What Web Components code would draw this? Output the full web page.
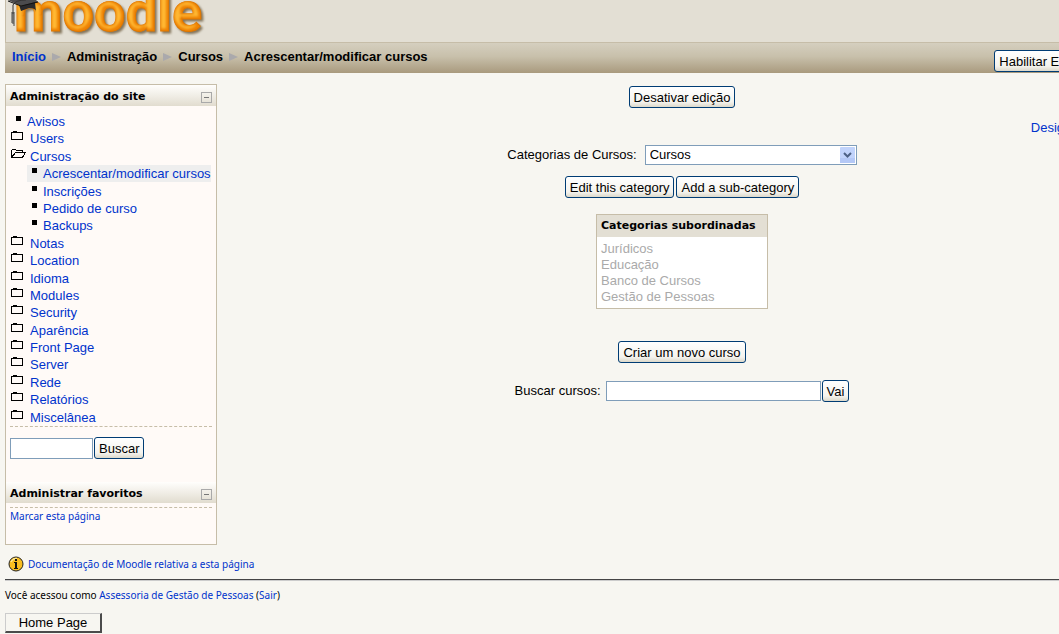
<!DOCTYPE html>
<html lang="pt">
<head>
<meta charset="utf-8">
<title>Acrescentar/modificar cursos</title>
<style>
  html { overflow: hidden; }
  body { margin: 0; background: #f7f6f1; color: #000; font: 13px/16px "Liberation Sans", Arial, sans-serif; }
</style>
</head>
<body>
<moodle-page></moodle-page>

<template id="t-page">
  <style>
    :host { display: block; padding-left: 5px; width: calc(100% + 83px); }
    .columns { display: grid; grid-template-columns: 212px 1fr; padding-top: 11px; }
  </style>
  <moodle-banner></moodle-banner>
  <nav-bar></nav-bar>
  <div class="columns">
    <admin-sidebar></admin-sidebar>
    <course-main></course-main>
  </div>
  <page-footer></page-footer>
</template>

<template id="t-banner">
  <style>
    :host { display: block; height: 42px; background: #e3dfd4; border-left: 1px solid #c6bda8; border-bottom: 1px solid #c6bda8; overflow: hidden; }
    svg { display: block; }
    text { font: 700 56px Roboto, sans-serif; }
  </style>
  <svg width="204" height="42" viewBox="6 0 204 42" role="img" aria-label="moodle">
    <defs>
      <filter id="bevel" x="-5%" y="-20%" width="112%" height="150%" color-interpolation-filters="sRGB">
        <feMorphology in="SourceAlpha" operator="erode" radius="2" result="core"/>
        <feGaussianBlur in="core" stdDeviation="1" result="glow"/>
        <feOffset in="glow" dx="-1" dy="-1" result="lit"/>
        <feFlood flood-color="#ffb833"/>
        <feComposite in2="lit" operator="in" result="light"/>
        <feComposite in="light" in2="SourceAlpha" operator="in" result="inner"/>
        <feGaussianBlur in="SourceAlpha" stdDeviation="1"/>
        <feOffset dx="2" dy="2" result="shade"/>
        <feFlood flood-color="#6b5a3c" flood-opacity=".8"/>
        <feComposite in2="shade" operator="in" result="shadow"/>
        <feMerge><feMergeNode in="shadow"/><feMergeNode in="SourceGraphic"/><feMergeNode in="inner"/></feMerge>
      </filter>
    </defs>
    <text x="14" y="31" fill="#ee8304" stroke="#e07800" stroke-width="1" filter="url(#bevel)">moodle</text>
    <path d="M8 0L21 6L38 2L36 0Z" fill="#4b4b4d"/>
    <path d="M19 5L21 11L29 8Q36 8 36 12L35 2L21 6Z" fill="#29292b"/>
    <path d="M8 1L21 6L38 2" fill="none" stroke="#111" stroke-width="1"/>
    <path d="M26 0Q15 0 13 5V14" fill="none" stroke="#333" stroke-width="1"/>
    <path d="M12 12V23M14 12V26M13 12V24" stroke="#444" stroke-width="1"/>
  </svg>
</template>

<template id="t-nav">
  <style>
    :host { display: flex; justify-content: space-between; align-items: flex-start; height: 30px; background: linear-gradient(#d5cfbf, #c8c0ab 45%, #a99a7e); font-weight: bold; }
    ol { display: flex; margin: 0; padding: 6px 7px; list-style: none; }
    li { display: flex; align-items: center; }
    li + li::before { content: ""; margin: 0 6px; border-left: 9px solid #aaa9ac; border-top: 4px solid transparent; border-bottom: 4px solid transparent; }
    a { color: #0033cc; text-decoration: none; }
    xp-button { margin: 7px 9px 0 0; font-weight: normal; }
  </style>
  <ol>
    <li><a href="#">Início</a></li><li>Administração</li><li>Cursos</li><li>Acrescentar/modificar cursos</li>
  </ol>
  <xp-button>Habilitar Edição Blocos</xp-button>
</template>

<template id="t-button">
  <style>
    :host { display: inline-block; }
    button { box-sizing: border-box; display: block; height: 22px; margin: 0; padding: 1px 4px 0; border: 1px solid #003c74; border-radius: 3px; background: linear-gradient(#fff, #f4f3ee 75%, #dcd8ca); color: #000; font: inherit; line-height: 20px; white-space: nowrap; }
    :host([classic]) button { width: 97px; height: 20px; padding-top: 0; border: 2px solid; border-color: #ccc #4b4b4b #4b4b4b #ccc; border-top-width: 1px; border-left-width: 1px; border-radius: 0; background: #f7f6f1; line-height: 16px; }
  </style>
  <button type="button"><slot></slot></button>
</template>

<template id="t-head">
  <style>
    :host { display: flex; justify-content: space-between; align-items: flex-start; height: 21px; padding: 0 4px; background: linear-gradient(#fffefc, #efece4 55%, #e1dccf); }
    h2 { margin: 0; font: bold 11px/24px "DejaVu Sans", Verdana, sans-serif; }
    button { box-sizing: border-box; width: 11px; height: 11px; margin-top: 7px; padding: 0 2px; border: 1px solid #a9a9a9; background: none; }
    button::before { content: ""; display: block; height: 1px; background: #777; }
  </style>
  <h2><slot></slot></h2>
  <button type="button" aria-label="Ocultar bloco"></button>
</template>

<template id="t-item">
  <style>
    :host { display: flex; align-items: flex-start; padding-left: 5px; }
    svg { flex: none; width: 19px; height: 12px; }
    :host([kind="page"]) svg { width: 16px; }
    :host([sub]) { padding-left: 21px; }
    span { display: flex; }
    :host([current]) span { background: #eee; }
    a { color: #0033cc; text-decoration: none; line-height: 17px; white-space: nowrap; }
    path, rect { display: none; }
    :host([kind="page"]) .dot, :host([kind="folder"]) .shut, :host([kind="open"]) .open { display: block; }
  </style>
  <span>
    <svg viewBox="0 0 19 12" preserveAspectRatio="xMinYMin slice" aria-hidden="true" shape-rendering="crispEdges">
      <rect class="dot" x="5" y="3" width="5" height="5"/>
      <path class="shut" d="M0 2H2V1H6V2H12V10H0ZM1 3V9H11V3Z" fill-rule="evenodd"/>
      <path class="open" d="M.5 9.500V2.500L1.500 1.500H4.500L5.500 2.500H11.500V4.500M.5 9.500L4.500 4.500H14.500L11.500 9.500Z" fill="none" stroke="#000"/>
    </svg>
    <a href="#"><slot></slot></a>
  </span>
</template>

<template id="t-side">
  <style>
    :host { box-sizing: border-box; display: block; border: 1px solid #c6bda8; background: #fffaf7; min-height: 461px; }
    nav { display: grid; grid-auto-rows: 1fr; height: 313px; padding-top: 7px; }
    hr { margin: 0 4px; border: 0; border-top: 1px dashed #c6bda8; }
    form { display: flex; align-items: center; gap: 1px; margin: 0; padding: 10px 4px 23px; }
    input { box-sizing: border-box; width: 83px; height: 21px; border: 1px solid #7f9db9; background: #fff; font: inherit; }
    .mark { margin-top: 4px; }
    a { display: block; padding: 0 4px; color: #0033cc; text-decoration: none; font: 10px/16px "Noto Sans", sans-serif; }
  </style>
  <block-head>Administração do site</block-head>
  <nav aria-label="Administração do site">
    <tree-item kind="page">Avisos</tree-item>
    <tree-item kind="folder">Users</tree-item>
    <tree-item kind="open">Cursos</tree-item>
    <tree-item kind="page" sub current>Acrescentar/modificar cursos</tree-item>
    <tree-item kind="page" sub>Inscrições</tree-item>
    <tree-item kind="page" sub>Pedido de curso</tree-item>
    <tree-item kind="page" sub>Backups</tree-item>
    <tree-item kind="folder">Notas</tree-item>
    <tree-item kind="folder">Location</tree-item>
    <tree-item kind="folder">Idioma</tree-item>
    <tree-item kind="folder">Modules</tree-item>
    <tree-item kind="folder">Security</tree-item>
    <tree-item kind="folder">Aparência</tree-item>
    <tree-item kind="folder">Front Page</tree-item>
    <tree-item kind="folder">Server</tree-item>
    <tree-item kind="folder">Rede</tree-item>
    <tree-item kind="folder">Relatórios</tree-item>
    <tree-item kind="folder">Miscelânea</tree-item>
  </nav>
  <hr>
  <form><input type="text" aria-label="Buscar"><xp-button>Buscar</xp-button></form>
  <block-head>Administrar favoritos</block-head>
  <hr class="mark">
  <a href="#">Marcar esta página</a>
</template>

<template id="t-main">
  <style>
    :host { display: flex; flex-direction: column; align-items: center; padding-top: 2px; }
    a { color: #0033cc; text-decoration: none; }
    .assign { align-self: flex-end; margin: 12px 15px 9px; }
    .row { display: flex; align-items: center; gap: 8px; margin: 0; }
    .tight { gap: 1px; }
    .pair { gap: 2px; margin: 11px 0 16px; }
    .select { display: grid; width: 212px; height: 20px; }
    .select > * { grid-area: 1 / 1; }
    select { box-sizing: border-box; width: 100%; height: 20px; padding: 0 4px; border: 1px solid #7f9db9; border-radius: 0; background: #fff; color: #000; font: inherit; appearance: none; }
    .select svg { justify-self: end; margin: 2px; pointer-events: none; }
    table { border: 1px solid #c6bda8; border-spacing: 0; background: #fff; width: 172px; margin-bottom: 32px; }
    th { padding: 0 4px; background: #e3dfd4; text-align: left; white-space: nowrap; font: bold 11px/22px "DejaVu Sans", Verdana, sans-serif; }
    td { padding: 0 4px; }
    tbody tr:first-child td { padding-top: 4px; }
    tbody tr:last-child td { padding-bottom: 3px; }
    td a { color: #aaa; }
    .search { margin-top: 17px; gap: 5px; }
    input { box-sizing: border-box; width: 215px; height: 20px; border: 1px solid #7f9db9; background: #fff; font: inherit; }
  </style>
  <xp-button>Desativar edição</xp-button>
  <a class="assign" href="#">Designar funções</a>
  <form class="row">
    <label for="cat">Categorias de Cursos:</label>
    <div class="select">
      <select id="cat"><option>Cursos</option></select>
      <svg width="15" height="16" viewBox="0 0 15 16" aria-hidden="true">
        <rect width="15" height="16" rx="1" fill="#c1d3fb"/><path d="M0 11H15V16H0Z" fill="#b4c8f6"/>
        <path d="M4 6L7.500 9.500L11 6" fill="none" stroke="#4d6185" stroke-width="2"/>
      </svg>
    </div>
  </form>
  <div class="row pair"><xp-button>Edit this category</xp-button><xp-button>Add a sub-category</xp-button></div>
  <table>
    <thead><tr><th>Categorias subordinadas</th></tr></thead>
    <tbody>
      <tr><td><a href="#">Jurídicos</a></td></tr>
      <tr><td><a href="#">Educação</a></td></tr>
      <tr><td><a href="#">Banco de Cursos</a></td></tr>
      <tr><td><a href="#">Gestão de Pessoas</a></td></tr>
    </tbody>
  </table>
  <xp-button>Criar um novo curso</xp-button>
  <form class="row search">
    <label for="q">Buscar cursos:</label>
    <div class="row tight"><input id="q" type="text"><xp-button>Vai</xp-button></div>
  </form>
</template>

<template id="t-footer">
  <style>
    :host { display: block; padding-top: 11px; font: 10px/16px "Noto Sans", sans-serif; }
    a { color: #0033cc; text-decoration: none; }
    .docs { display: flex; align-items: center; gap: 4px; padding-left: 3px; }
    hr { margin: 7px 0 6px; border: 0; border-top: 1px solid #444; border-bottom: 1px solid #ccc; }
    p { margin: 0 0 10px; }
    xp-button { font: 13px/16px "Liberation Sans", Arial, sans-serif; }
  </style>
  <div class="docs">
    <svg width="16" height="16" viewBox="0 0 16 16" aria-hidden="true">
      <circle cx="8" cy="8" r="7" fill="#f9bd1f" stroke="#222"/>
      <path d="M3 6Q5 2 9 2.500" fill="none" stroke="#ffe68a" stroke-width="1.500"/>
      <path d="M7 3H9V5H7ZM6 6H9V12H10V13H6V12H7V7H6Z" fill="#111"/>
    </svg>
    <a href="#">Documentação de Moodle relativa a esta página</a>
  </div>
  <hr>
  <p>Você acessou como <a href="#">Assessoria de Gestão de Pessoas</a> (<a href="#">Sair</a>)</p>
  <xp-button classic>Home Page</xp-button>
</template>

<script>
  class TemplateElement extends HTMLElement {
    constructor() {
      super();
      const source = document.getElementById(this.constructor.template);
      this.attachShadow({ mode: "open" }).append(source.content.cloneNode(true));
    }
  }
  customElements.define("xp-button", class extends TemplateElement { static template = "t-button"; });
  customElements.define("block-head", class extends TemplateElement { static template = "t-head"; });
  customElements.define("tree-item", class extends TemplateElement { static template = "t-item"; });
  customElements.define("moodle-banner", class extends TemplateElement { static template = "t-banner"; });
  customElements.define("nav-bar", class extends TemplateElement { static template = "t-nav"; });
  customElements.define("admin-sidebar", class extends TemplateElement { static template = "t-side"; });
  customElements.define("course-main", class extends TemplateElement { static template = "t-main"; });
  customElements.define("page-footer", class extends TemplateElement { static template = "t-footer"; });
  customElements.define("moodle-page", class extends TemplateElement { static template = "t-page"; });
</script>
</body>
</html>
